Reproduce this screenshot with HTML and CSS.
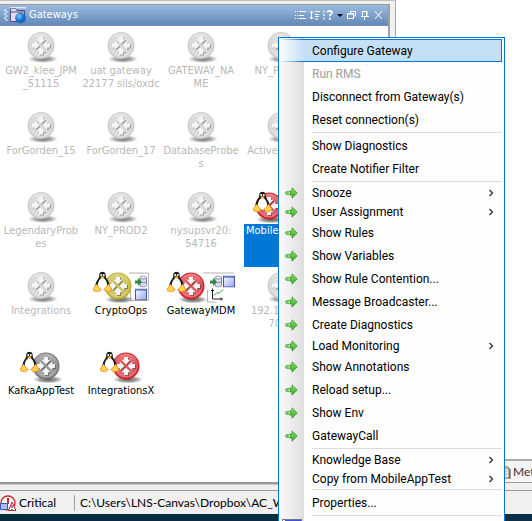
FILE: index.html
```html
<!DOCTYPE html>
<html lang="en">
<head>
<meta charset="utf-8">
<title>Gateways</title>
<link rel="stylesheet" href="styles.css">
</head>
<body>
<svg class="defs" aria-hidden="true">
  <defs>
    <linearGradient id="shine" x1="0" y1="0" x2="0" y2="1">
      <stop offset="0" stop-color="#fff" stop-opacity=".45"/>
      <stop offset=".5" stop-color="#fff" stop-opacity=".2"/>
      <stop offset="1" stop-color="#fff" stop-opacity=".4"/>
    </linearGradient>
    <radialGradient id="shade">
      <stop offset="0" stop-color="#444" stop-opacity=".9"/>
      <stop offset=".6" stop-color="#666" stop-opacity=".6"/>
      <stop offset="1" stop-color="#888" stop-opacity="0"/>
    </radialGradient>
    <linearGradient id="green" x1="0" y1="0" x2="0" y2="1">
      <stop offset="0" stop-color="#8be05e"/>
      <stop offset="1" stop-color="#35a82b"/>
    </linearGradient>
    <linearGradient id="pane" x1="0" y1="0" x2="1" y2="1">
      <stop offset="0" stop-color="#fff"/>
      <stop offset="1" stop-color="#8fa6ea"/>
    </linearGradient>
    <radialGradient id="globe" cx=".35" cy=".3">
      <stop offset="0" stop-color="#7cc8ff"/>
      <stop offset="1" stop-color="#0d6cc8"/>
    </radialGradient>
  </defs>
  <symbol id="ball" viewBox="0 0 32 32">
    <ellipse cx="16" cy="28" rx="15" ry="4" fill="url(#shade)"/>
    <circle cx="14" cy="14.500" r="13.500" fill="currentColor"/>
    <circle cx="14" cy="14" r="12" fill="url(#shine)"/>
    <g fill="#333" opacity=".45" transform="translate(1 1)">
      <path id="cross" d="M12 5.500h4v2.700h2.500L14 13 9.500 8.200H12zM12 23.500h4v-2.700h2.500L14 16l-4.500 4.800H12zM5 12.500v4h2.700V19l4.800-4.500L7.700 10v2.500zM23 12.500v4h-2.700V19l-4.800-4.500 4.800-4.500v2.500z"/>
    </g>
    <use href="#cross" fill="#f4f4f4"/>
  </symbol>
  <symbol id="tux" viewBox="0 0 19 21">
    <path d="M9.500.3C7 .3 6 2 6.200 4.700c.1 2.100-3.200 4.200-3.800 8.800L5 18h9l2.600-4.500c-.6-4.600-3.800-6.500-3.800-8.800C12.800 2 12 .3 9.500.3z" fill="#1c1c1c"/>
    <path d="M9.500 6.300c-2.600.6-4.700 4.200-4.700 7.600 0 2.700 2 4.400 4.700 4.400s4.700-1.700 4.700-4.400c0-3.400-2.100-7-4.700-7.600z" fill="#fff"/>
    <circle cx="8.200" cy="3.600" r="1" fill="#fff"/><circle cx="10.800" cy="3.600" r="1" fill="#fff"/>
    <path d="M7.200 5.500l2.300-.9 2.300.9-2.300 1.700z" fill="#f5b21a"/>
    <path d="M3.300 12.700l4 4.600c.4 2-1 3.200-2.800 3L.4 19.200c-.2-2 .3-3.200 1.200-3.700zM15.700 12.700l-4 4.600c-.4 2 1 3.200 2.800 3l4.100-1.100c.2-2-.3-3.200-1.200-3.700z" fill="#ffd24a" stroke="#ee8420" stroke-width=".8"/>
  </symbol>
  <symbol id="db" viewBox="0 0 12 12">
    <path d="M5 2v8c0 2 6.500 2 6.500 0V2z" fill="#d9dcf0" stroke="#7f84b4"/>
    <ellipse cx="8.200" cy="2" rx="3.200" ry="1.500" fill="#fff" stroke="#7f84b4"/>
    <path d="M5 6c1.500 1.500 5 1.500 6.500 0" fill="none" stroke="#7f84b4"/>
    <path d="M0 5h3V2.500L7 6.500l-4 4V8H0z" fill="#2a8a40"/>
  </symbol>
  <symbol id="window" viewBox="0 0 12 12">
    <rect x=".5" y=".5" width="11" height="11" fill="url(#pane)" stroke="#4a5899"/>
    <path d="M1 1.500h10" stroke="#3b55b8"/>
  </symbol>
  <symbol id="go" viewBox="0 0 13 12">
    <circle cx="2" cy="6" r="1.500" fill="#a5ee85" stroke="#3fa535" stroke-width=".8"/>
    <circle cx="4.500" cy="6" r="1.800" fill="#a5ee85" stroke="#3fa535" stroke-width=".8"/>
    <path d="M5.500 3.800H7V.8L12.300 6 7 11.200V8.200H5.500z" fill="url(#green)" stroke="#358f2c" stroke-width=".7"/>
  </symbol>
  <symbol id="more" viewBox="0 0 6 8"><path d="M1.500 1l3 3-3 3" fill="none" stroke="#333" stroke-width="1.300"/></symbol>
</svg>

<main class="app">
  <div class="workspace">
    <section class="dock">
      <div class="panel">
        <header class="title">
          <svg class="grip" viewBox="0 0 4 14" aria-hidden="true"><path d="M0 2h2M0 6h2M0 10h2M1.500 4h2M1.500 8h2M1.500 12h2" stroke="#e8f0fa" stroke-width="1.500"/></svg>
          <svg class="folder" viewBox="0 0 18 17" aria-hidden="true">
            <path d="M1.500 14.500v-13h5l1.500 2h7.500v11z" fill="#e4dcf0" stroke="#54477f"/>
            <path d="M1 .8h16" stroke="#fff" fill="none"/>
            <path d="M2 5h13" stroke="#54477f"/>
            <circle cx="11.500" cy="11" r="5" fill="url(#globe)" stroke="#1e62a8" stroke-width=".6"/>
          </svg>
          <h1>Gateways</h1>
          <div class="tools">
            <button type="button" aria-label="List"><svg viewBox="0 0 12 10"><path d="M0 1.500h1M2 1.500h1M4 1.500h7M0 5.500h1M2 5.500h1M4 5.500h5M0 8.500h1M2 8.500h1M4 8.500h7" stroke="#fff"/></svg></button>
            <button type="button" aria-label="Sort"><svg viewBox="0 0 12 10"><path d="M2.500 1v8M.5 3l2-2 2 2M.5 7l2 2 2-2M6 1.500h5M6 4.500h4M6 6.500h4M6 9h3" stroke="#fff" fill="none"/></svg></button>
            <button type="button" aria-label="Help"><svg viewBox="0 0 12 10"><path d="M1 .5v2M1 4v2M1 7.500v2" stroke="#fff" stroke-width="1.300"/><path d="M4.500 2.500c0-2.200 4.500-2.200 4.500 0 0 1.700-2.200 1.500-2.200 3.700M6.800 7.800v2" stroke="#fff" stroke-width="1.700" fill="none"/></svg></button>
            <button class="small" type="button" aria-label="Options"><svg viewBox="0 0 6 10"><path d="M0 4h6L3 7z" fill="#000"/></svg></button>
            <button type="button" aria-label="Restore"><svg viewBox="0 0 12 10"><path d="M5.500 3V1.500h5V6H9M2.500 3.500h6v5h-6zM2.500 4h6" stroke="#fff" fill="none"/></svg></button>
            <button type="button" aria-label="Pin"><svg viewBox="0 0 12 10"><path d="M3.500 6V1.500h4V6M2 6.500h8M5.500 7v3M8 1v5" stroke="#fff" fill="none"/></svg></button>
            <button type="button" aria-label="Close"><svg viewBox="0 0 12 10"><path d="M2 1l7 8M9 1L2 9" stroke="#fff" fill="none"/></svg></button>
          </div>
        </header>
        <ul class="grid">
          <li class="off"><svg class="one"><use href="#ball" width="32" height="32"/></svg><span>GW2_klee_JPM<br>_51115</span></li>
          <li class="off"><svg class="one"><use href="#ball" width="32" height="32"/></svg><span>uat gateway<br>22177 sils/oxdc</span></li>
          <li class="off"><svg class="one"><use href="#ball" width="32" height="32"/></svg><span>GATEWAY_NA<br>ME</span></li>
          <li class="off"><svg class="one"><use href="#ball" width="32" height="32"/></svg><span>NY_PROD1</span></li>
          <li class="off"><svg class="one"><use href="#ball" width="32" height="32"/></svg><span>ForGorden_15</span></li>
          <li class="off"><svg class="one"><use href="#ball" width="32" height="32"/></svg><span>ForGorden_17</span></li>
          <li class="off"><svg class="one"><use href="#ball" width="32" height="32"/></svg><span>DatabaseProbe<br>s</span></li>
          <li class="off"><svg class="one"><use href="#ball" width="32" height="32"/></svg><span>ActiveTrades_</span></li>
          <li class="off"><svg class="one"><use href="#ball" width="32" height="32"/></svg><span>LegendaryProb<br>es</span></li>
          <li class="off"><svg class="one"><use href="#ball" width="32" height="32"/></svg><span>NY_PROD2</span></li>
          <li class="off"><svg class="one"><use href="#ball" width="32" height="32"/></svg><span>nysupsvr20:<br>54716</span></li>
          <li class="red selected"><svg class="two" viewBox="0 0 56 32"><use href="#ball" x="19" width="32" height="32"/><use href="#ball" x="2" width="32" height="32"/><use href="#tux" width="19" height="21"/></svg><span>MobileAppTest</span></li>
          <li class="off"><svg class="one"><use href="#ball" width="32" height="32"/></svg><span>Integrations</span></li>
          <li class="yellow"><svg class="two" viewBox="0 0 56 32"><path d="M36 1.500h19.500V29h-18V18" fill="none" stroke="#b4b4b4"/><use href="#ball" x="11" width="32" height="32"/><use href="#tux" width="19" height="21"/><use href="#db" x="42" y="4" width="12" height="12"/><use href="#window" x="42" y="17" width="12" height="12"/></svg><span>CryptoOps</span></li>
          <li class="red"><svg class="three" viewBox="0 0 68 32"><path d="M36 1.500h31M40.500 18v12.500h9" fill="none" stroke="#b4b4b4"/><use href="#ball" x="10" width="32" height="32"/><use href="#tux" width="19" height="21"/><use href="#db" x="43" y="4" width="12" height="12"/><use href="#window" x="56" y="4" width="12" height="12"/><path d="M45.500 17v10.500H56M44 19h3M54 26v3" fill="none" stroke="#222"/><path d="M47 24l3-3 2 1 4-4" fill="none" stroke="#21a23a"/></svg><span>GatewayMDM</span></li>
          <li class="off"><svg class="one"><use href="#ball" width="32" height="32"/></svg><span>192.168.10:<br>7039</span></li>
          <li class="grey"><svg class="pair" viewBox="0 0 42 32"><use href="#ball" x="12" width="32" height="32"/><use href="#tux" width="19" height="21"/></svg><span>KafkaAppTest</span></li>
          <li class="red"><svg class="pair" viewBox="0 0 42 32"><use href="#ball" x="12" width="32" height="32"/><use href="#tux" width="19" height="21"/></svg><span>IntegrationsX</span></li>
        </ul>
      </div>
    </section>
    <section class="editor">
      <div class="page"></div>
      <div class="tabs">
        <svg viewBox="0 0 12 14" aria-hidden="true"><path d="M1 3h9v10H1z" fill="#fff" stroke="#555"/><path d="M1 6h9M1 9h9M4 3v10M7 3v10" stroke="#bbb"/><path d="M3 2h6" stroke="#e0a020" stroke-width="2"/><path d="M11 4v10" stroke="#444"/></svg>
        <span>Met</span>
      </div>
    </section>
  </div>
  <footer class="status">
    <div class="level">
      <svg viewBox="0 0 16 16" aria-hidden="true"><circle cx="8" cy="8" r="7" fill="#fff" stroke="#cf2a35" stroke-width="1.400"/><path d="M8 3v6" stroke="#cf2a35" stroke-width="2"/><path d="M.5 8.500h7v6h-7z" fill="#a9bdf5" stroke="#3b55bd"/><path d="M12 7l4 8.500H8.500z" fill="#fff" stroke="#b52432"/><path d="M12 10v3M12 14v1" stroke="#222"/></svg>
      <span>Critical</span>
    </div>
    <div class="path">C:\Users\LNS-Canvas\Dropbox\AC_Work</div>
  </footer>
  <div class="taskbar"></div>
</main>

<div class="menu" role="menu">
  <button type="button" role="menuitem" class="active"><span>Configure Gateway</span></button>
  <button type="button" role="menuitem" disabled><span>Run RMS</span></button>
  <button type="button" role="menuitem"><span>Disconnect from Gateway(s)</span></button>
  <button type="button" role="menuitem"><span>Reset connection(s)</span></button>
  <hr>
  <button type="button" role="menuitem"><span>Show Diagnostics</span></button>
  <button type="button" role="menuitem"><span>Create Notifier Filter</span></button>
  <hr>
  <button type="button" role="menuitem" class="sub"><svg class="go"><use href="#go"/></svg><span>Snooze</span><svg class="more"><use href="#more"/></svg></button>
  <button type="button" role="menuitem" class="sub"><svg class="go"><use href="#go"/></svg><span>User Assignment</span><svg class="more"><use href="#more"/></svg></button>
  <button type="button" role="menuitem"><svg class="go"><use href="#go"/></svg><span>Show Rules</span></button>
  <button type="button" role="menuitem"><svg class="go"><use href="#go"/></svg><span>Show Variables</span></button>
  <button type="button" role="menuitem"><svg class="go"><use href="#go"/></svg><span>Show Rule Contention...</span></button>
  <button type="button" role="menuitem"><svg class="go"><use href="#go"/></svg><span>Message Broadcaster...</span></button>
  <button type="button" role="menuitem"><svg class="go"><use href="#go"/></svg><span>Create Diagnostics</span></button>
  <button type="button" role="menuitem" class="sub"><svg class="go"><use href="#go"/></svg><span>Load Monitoring</span><svg class="more"><use href="#more"/></svg></button>
  <button type="button" role="menuitem"><svg class="go"><use href="#go"/></svg><span>Show Annotations</span></button>
  <button type="button" role="menuitem"><svg class="go"><use href="#go"/></svg><span>Reload setup...</span></button>
  <button type="button" role="menuitem"><svg class="go"><use href="#go"/></svg><span>Show Env</span></button>
  <button type="button" role="menuitem"><svg class="go"><use href="#go"/></svg><span>GatewayCall</span></button>
  <hr>
  <button type="button" role="menuitem" class="sub"><span>Knowledge Base</span><svg class="more"><use href="#more"/></svg></button>
  <button type="button" role="menuitem" class="sub"><span>Copy from MobileAppTest</span><svg class="more"><use href="#more"/></svg></button>
  <hr>
  <button type="button" role="menuitem"><span>Properties...</span></button>
  <hr>
  <button type="button" role="menuitem" class="last" aria-label="Window"><svg viewBox="0 0 20 16"><rect x=".5" y=".5" width="19" height="15" fill="#f4f4f4" stroke="#777"/><path d="M3 2h16" stroke="#3d4fe0" stroke-width="2"/></svg></button>
</div>
</body>
</html>
```
FILE: styles.css
```css
* { box-sizing: border-box; }

body {
  margin: 0;
  height: 100vh;
  overflow: hidden;
  position: relative;
  background: #fff;
  color: #000;
  font: 12px/16px Roboto, "Open Sans", sans-serif;
}

button {
  margin: 0;
  padding: 0;
  border: 0;
  background: none;
  font: inherit;
  color: inherit;
}

svg { display: block; flex: none; }
.defs { position: absolute; width: 0; height: 0; }

.app { height: 100%; display: flex; flex-direction: column; }
.workspace { flex: 1; min-height: 0; display: flex; }

.dock {
  flex: none;
  width: 396px;
  padding: 3px 5px 6px 0;
  background: #f0f0f0;
  border-top: 1px solid #c0c0c0;
  border-right: 1px solid #a8a8a8;
  display: flex;
}
.panel {
  flex: 1;
  display: flex;
  flex-direction: column;
  background: #fff;
  border-top: 1px solid #999;
  border-right: 2px solid #a0a0a0;
  border-bottom: 2px solid #999;
  box-shadow: 0 1px 0 #c8c8c8;
  overflow: hidden;
}

.title {
  height: 21px;
  flex: none;
  display: flex;
  align-items: center;
  padding: 0 3px 0 4px;
  background: linear-gradient(#9bbbe0, #6489b8);
  border-bottom: 1px solid #7590b0;
  color: #fff;
}
.title h1 {
  margin: 0 0 0 2px;
  font: 11px/16px "DejaVu Sans Condensed", "DejaVu Sans", sans-serif;
}
.grip { width: 4px; height: 14px; }
.folder { width: 18px; height: 17px; margin-left: 1px; }
.tools { margin-left: auto; display: flex; gap: 2px; }
.tools svg { width: 12px; height: 10px; }
.tools .small svg { width: 6px; }

.grid {
  list-style: none;
  margin: 0;
  padding: 5px 0 0 1px;
  display: grid;
  grid-template-columns: repeat(4, 80px);
  grid-auto-rows: 80px;
  font: 11px/13px "DejaVu Sans Condensed", "DejaVu Sans", sans-serif;
}
.grid li {
  display: flex;
  flex-direction: column;
  align-items: center;
  text-align: center;
  white-space: nowrap;
}
.grid svg { height: 33px; }
.one { width: 28px; overflow: visible; }
.pair { width: 42px; }
.two { width: 56px; }
.three { width: 68px; }
.off svg { color: #c6c6c6; opacity: .85; }
.off span { color: #b8b8b8; }
.red svg { color: #d6202a; }
.yellow svg { color: #bfb02c; }
.grey svg { color: #787878; }
.selected span {
  width: 74px;
  height: 43px;
  background: #0078d7;
  color: #fff;
  overflow: hidden;
  text-align: left;
  padding-left: 2px;
}

.editor { flex: 1; min-width: 0; display: flex; flex-direction: column; background: #f0f0f0; padding-bottom: 7px; }
.page { flex: 1; background: #fff; border-bottom: 2px solid #aaa; }
.tabs {
  height: 22px;
  padding-left: 103px;
  display: flex;
  align-items: center;
  gap: 2px;
  background: #f5f5f5;
  border-bottom: 1px solid #999;
  color: #333;
  font-family: Lato, sans-serif;
}
.tabs svg { width: 12px; height: 14px; }

.status {
  height: 24px;
  flex: none;
  display: flex;
  align-items: center;
  background: #f0f0f0;
  border-top: 1px solid #999;
  font-family: Lato, sans-serif;
  white-space: nowrap;
}
.level {
  width: 75px;
  display: flex;
  align-items: center;
  gap: 3px;
  border-right: 1px solid #a0a0a0;
}
.level svg { width: 16px; height: 16px; }
.path { padding-left: 5px; }
.taskbar { height: 7px; flex: none; background: linear-gradient(90deg, #062b3b, #0b2f49); }

.menu {
  position: absolute;
  left: 278px;
  top: 37px;
  width: 227px;
  padding: 1px;
  display: flex;
  flex-direction: column;
  border: 1px solid #0078d7;
  background: linear-gradient(90deg, #fbfbfb, #dedede) 0 0 / 25px 100% no-repeat #fdfdfd;
}
.menu button {
  height: 23px;
  display: flex;
  align-items: center;
  padding: 0 9px 0 32px;
  text-align: left;
  white-space: nowrap;
}
.menu .sub { height: 19px; }
.menu button:has(.go) { padding-left: 5px; }
.menu .active {
  margin-right: 1px;
  border: 1px solid #0078d7;
  background: linear-gradient(90deg, #fcfcfc, #c5e0f5 24px);
  border-image: linear-gradient(90deg, #fcfcfc, #0078d7 24px) 1;
  border-left: 0;
}
.menu :disabled { color: #a0a0a0; }
.go { width: 13px; height: 12px; margin-right: 14px; }
.more { width: 6px; height: 8px; margin-left: auto; }
.menu hr {
  margin: 1px 1px 1px 32px;
  border: 0;
  height: 1px;
  width: auto;
  background: #dcdcdc;
}
.menu .last { padding-left: 2px; align-items: flex-start; }
.last svg { width: 20px; height: 16px; margin-top: 2px; }
```
